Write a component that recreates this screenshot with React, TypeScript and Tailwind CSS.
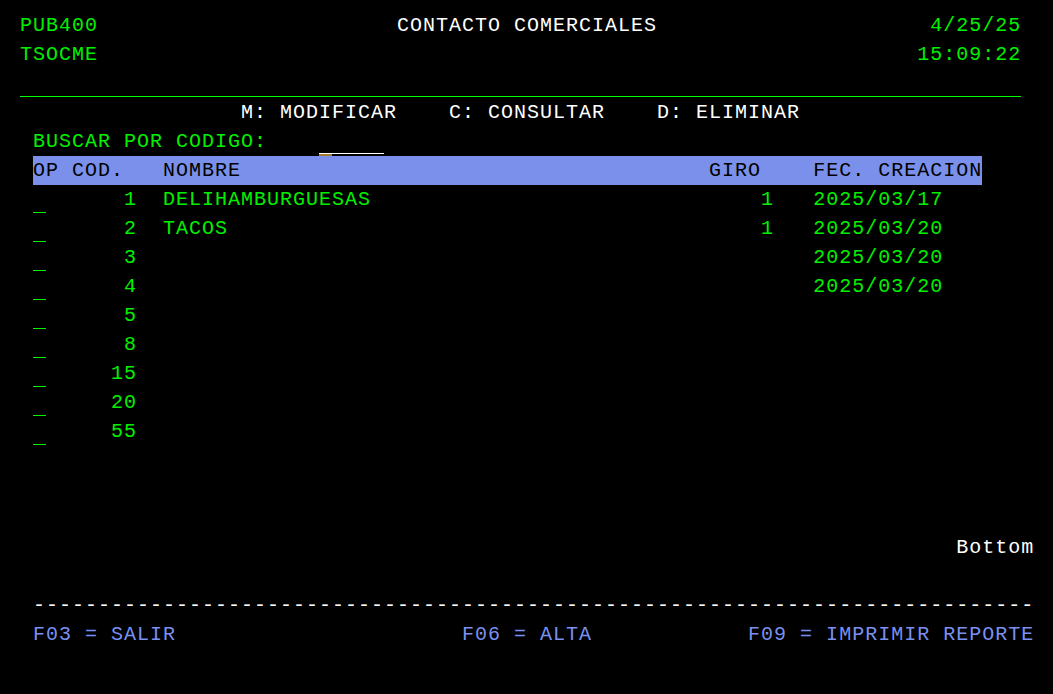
import React from 'react';

type Row = { code: string; name: string; giro: string; date: string };

const rows: Row[] = [
  { code: '1', name: 'DELIHAMBURGUESAS', giro: '1', date: '2025/03/17' },
  { code: '2', name: 'TACOS', giro: '1', date: '2025/03/20' },
  { code: '3', name: '', giro: '', date: '2025/03/20' },
  { code: '4', name: '', giro: '', date: '2025/03/20' },
  { code: '5', name: '', giro: '', date: '' },
  { code: '8', name: '', giro: '', date: '' },
  { code: '15', name: '', giro: '', date: '' },
  { code: '20', name: '', giro: '', date: '' },
  { code: '55', name: '', giro: '', date: '' },
];

const pad = (s: string, n: number) => s + ' '.repeat(Math.max(0, n - s.length));
const lpad = (s: string, n: number) => ' '.repeat(Math.max(0, n - s.length)) + s;

// one terminal line, 29px tall
function Line({ children, className = '' }: { children?: React.ReactNode; className?: string }) {
  return <div className={`h-[29px] leading-[30px] whitespace-pre ${className}`}>{children}</div>;
}

export default function App() {
  return (
    <div
      className="w-[1053px] h-[694px] bg-black overflow-hidden pt-[11px] pl-[7px] text-[20px] tracking-[1px] text-[#00f000]"
      style={{ fontFamily: '"Liberation Mono", "DejaVu Sans Mono", monospace' }}
    >
      {/* Header */}
      <Line>
        {' PUB400' + ' '.repeat(23)}
        <span className="text-white">CONTACTO COMERCIALES</span>
        {' '.repeat(21) + '4/25/25'}
      </Line>
      <Line>{' TSOCME' + ' '.repeat(63) + '15:09:22'}</Line>
      <div className="h-[29px] flex flex-col justify-end pb-[1px]">
        <div className="ml-[13px] w-[1001px] h-px bg-[#00ff00]" />
      </div>

      {/* Options */}
      <Line className="text-white">
        {' '.repeat(18) + 'M: MODIFICAR    C: CONSULTAR    D: ELIMINAR'}
      </Line>

      {/* Search */}
      <Line>
        {'  BUSCAR POR CODIGO:    '}
        <span className="relative inline-block w-[65px] h-[29px] align-top">
          <span className="absolute left-0 right-0 bottom-[2px] h-px bg-white" />
          <span className="absolute left-0 w-[13px] bottom-0 h-[2px] bg-[#a07a30]" />
        </span>
      </Line>

      {/* Column headers */}
      <Line>
        {'  '}
        <span className="inline-block bg-[#7a90ea] text-black h-[29px] align-top">
          {pad('OP COD.   NOMBRE', 52) + 'GIRO' + '    ' + 'FEC. CREACION'}
        </span>
      </Line>

      {/* Records */}
      {rows.map((r, i) => (
        <Line key={i}>
          {'  '}
          <span className="relative inline-block w-[13px] h-[29px] align-top">
            <span className="absolute left-0 w-[13px] bottom-[1px] h-px bg-[#00f000]" />
          </span>
          {'   ' + lpad(r.code, 4) + '  ' + pad(r.name, 42) + lpad(r.giro, 5) + '   ' + r.date}
        </Line>
      ))}

      <Line />
      <Line />
      <Line />
      <Line className="text-white">{' '.repeat(73) + 'Bottom'}</Line>
      <Line />
      <Line className="text-white">{'  ' + '-'.repeat(77)}</Line>
      <Line className="text-[#7a90f0]">
        {'  F03 = SALIR' + ' '.repeat(22) + 'F06 = ALTA' + ' '.repeat(12) + 'F09 = IMPRIMIR REPORTE'}
      </Line>
    </div>
  );
}
